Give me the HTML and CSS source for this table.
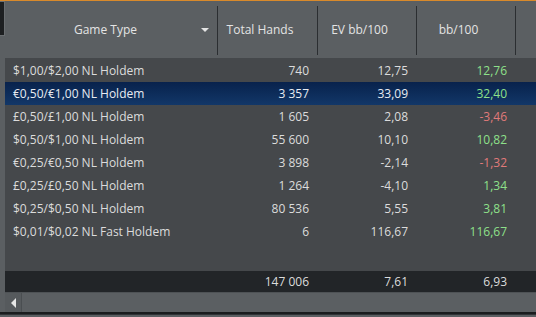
FILE: index.html
```html
<!doctype html>
<html lang="en">
  <head>
    <meta charset="UTF-8" />
    <title>Game Type Results</title>
    <link rel="stylesheet" href="styles.css">
  </head>
  <body>
    <div class="panel">
      <div class="grip"></div>

      <!-- column headers -->
      <div class="grid-head">
        <div class="head-cell first">Game Type<span class="sort-caret"></span></div>
        <div class="head-cell">Total Hands</div>
        <div class="head-cell">EV bb/100</div>
        <div class="head-cell">bb/100</div>
        <div class="head-cell rest"></div>
      </div>

      <!-- rows -->
      <div class="grid-body">
        <div class="row">
          <div class="cell name">$1,00/$2,00 NL Holdem</div>
          <div class="cell">740</div>
          <div class="cell">12,75</div>
          <div class="cell pos">12,76</div>
        </div>
        <div class="row selected">
          <div class="cell name">€0,50/€1,00 NL Holdem</div>
          <div class="cell">3 357</div>
          <div class="cell">33,09</div>
          <div class="cell pos">32,40</div>
        </div>
        <div class="row">
          <div class="cell name">£0,50/£1,00 NL Holdem</div>
          <div class="cell">1 605</div>
          <div class="cell">2,08</div>
          <div class="cell neg">-3,46</div>
        </div>
        <div class="row">
          <div class="cell name">$0,50/$1,00 NL Holdem</div>
          <div class="cell">55 600</div>
          <div class="cell">10,10</div>
          <div class="cell pos">10,82</div>
        </div>
        <div class="row">
          <div class="cell name">€0,25/€0,50 NL Holdem</div>
          <div class="cell">3 898</div>
          <div class="cell">-2,14</div>
          <div class="cell neg">-1,32</div>
        </div>
        <div class="row">
          <div class="cell name">£0,25/£0,50 NL Holdem</div>
          <div class="cell">1 264</div>
          <div class="cell">-4,10</div>
          <div class="cell pos">1,34</div>
        </div>
        <div class="row">
          <div class="cell name">$0,25/$0,50 NL Holdem</div>
          <div class="cell">80 536</div>
          <div class="cell">5,55</div>
          <div class="cell pos">3,81</div>
        </div>
        <div class="row">
          <div class="cell name">$0,01/$0,02 NL Fast Holdem</div>
          <div class="cell">6</div>
          <div class="cell">116,67</div>
          <div class="cell pos">116,67</div>
        </div>
      </div>

      <!-- totals -->
      <div class="grid-foot">
        <div class="cell name"></div>
        <div class="cell">147 006</div>
        <div class="cell">7,61</div>
        <div class="cell">6,93</div>
      </div>

      <!-- horizontal scrollbar -->
      <div class="hscroll">
        <div class="scroll-btn"><span class="arrow-left"></span></div>
      </div>
      <div class="status-edge"></div>
    </div>
  </body>
</html>
```

FILE: styles.css
```css
* {
  margin: 0;
  padding: 0;
  box-sizing: border-box;
}

body {
  font-family: 'Open Sans', 'Noto Sans', sans-serif;
  font-size: 12px;
  background: #5b5f62;
  color: #dcdcdc;
  width: 536px;
  height: 317px;
  overflow: hidden;
}

.panel {
  position: relative;
  height: 317px;
  display: flex;
  flex-direction: column;
  border-top: 1px solid #d98a2b;
  background: #5b5f62;
}

/* little dark handle in the corner */
.grip {
  position: absolute;
  left: 0;
  top: 0;
  width: 5px;
  height: 35px;
  background: #1d1f21;
  border: 1px solid #6a6e71;
  border-left: none;
}

/* header */
.grid-head {
  display: flex;
  height: 57px;
  padding-left: 5px;
  align-items: stretch;
}

.head-cell {
  position: relative;
  display: flex;
  align-items: center;
  justify-content: center;
  flex: none;
  width: 99px;
  padding-right: 16px;
  color: #e4e4e4;
  font-size: 12px;
}

.head-cell::after {
  content: '';
  position: absolute;
  right: 0;
  top: 5px;
  bottom: 3px;
  width: 1px;
  background: #2b2e31;
}

.head-cell.first {
  width: 213px;
  padding-right: 12px;
}

.head-cell:nth-child(2) {
  width: 100px;
}

.head-cell.rest {
  flex: 1;
}

.head-cell.rest::after {
  display: none;
}

.sort-caret {
  position: absolute;
  right: 9px;
  top: 27px;
  width: 0;
  height: 0;
  border-left: 4px solid transparent;
  border-right: 4px solid transparent;
  border-top: 4px solid #e4e4e4;
}

/* body */
.grid-body {
  margin-left: 5px;
  background: #45484b;
  height: 213px;
  padding-top: 1px;
}

.row {
  display: flex;
  height: 23px;
  align-items: center;
}

.row.selected {
  background: linear-gradient(to bottom, #08224c 0%, #123768 100%);
  color: #e8ecf2;
}

.cell {
  flex: none;
  width: 99px;
  text-align: right;
  padding-right: 9px;
  white-space: nowrap;
}

.cell.name {
  width: 213px;
  text-align: left;
  padding-left: 8px;
  padding-right: 0;
}

.row .cell:nth-child(2),
.grid-foot .cell:nth-child(2) {
  width: 100px;
}

.cell.pos {
  color: #8ee08a;
}

.cell.neg {
  color: #e07a7a;
}

/* totals */
.grid-foot {
  display: flex;
  margin-left: 5px;
  height: 21px;
  align-items: center;
  background: #222528;
  color: #dcdcdc;
}

/* scrollbar */
.hscroll {
  margin-left: 5px;
  height: 20px;
  background: #5b5f62;
  border-top: 1px solid #4e5255;
  display: flex;
}

.scroll-btn {
  width: 17px;
  height: 100%;
  background: #565a5d;
  border-right: 1px solid #4a4e51;
  display: flex;
  align-items: center;
  justify-content: center;
}

.arrow-left {
  width: 0;
  height: 0;
  border-top: 5px solid transparent;
  border-bottom: 5px solid transparent;
  border-right: 5px solid #e6e6e6;
}

.status-edge {
  height: 3px;
  background: #1a1c1e;
  border-bottom: 1px solid #303336;
}
```
